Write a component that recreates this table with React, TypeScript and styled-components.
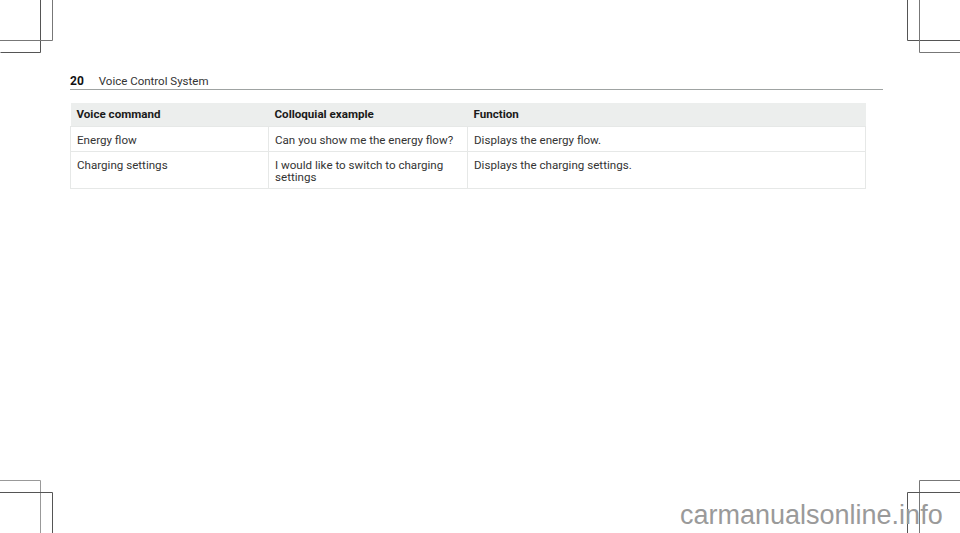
import React from 'react';
import styled, { createGlobalStyle } from 'styled-components';

type Row = {
  command: string;
  example: string;
  result: string;
};

const rows: Row[] = [
  { command: 'Energy flow', example: 'Can you show me the energy flow?', result: 'Displays the energy flow.' },
  { command: 'Charging settings', example: 'I would like to switch to charging settings', result: 'Displays the charging settings.' },
];

function CropMarks() {
  return (
    <>
      <StyledMark style={{ left: 0, top: 0 }} viewBox="0 0 60 60">
        <path d="M40.5 0V52.5M0.5 52.5H40.5" stroke="#555" fill="none" />
        <path d="M52.5 0V40.5M0 40.5H52.5" stroke="#777" fill="none" />
      </StyledMark>
      <StyledMark style={{ right: 0, top: 0 }} viewBox="0 0 60 60">
        <path d="M7.5 0V40.5H60" stroke="#555" fill="none" />
        <path d="M19.5 0V52.5H60" stroke="#777" fill="none" />
      </StyledMark>
      <StyledMark style={{ left: 0, bottom: 0 }} viewBox="0 0 60 60">
        <path d="M0 7.5H40.5V60" stroke="#999" fill="none" />
        <path d="M0 19.5H52.5V60" stroke="#555" fill="none" />
      </StyledMark>
      <StyledMark style={{ right: 0, bottom: 0 }} viewBox="0 0 60 60">
        <path d="M60 7.5H19.5V60" stroke="#777" fill="none" />
        <path d="M60 19.5H7.5V60" stroke="#555" fill="none" />
      </StyledMark>
    </>
  );
}

function App() {
  return (
    <StyledPage>
      <GlobalStyle />
      <CropMarks />
      <StyledHeader>
        <StyledPageNo>20</StyledPageNo>
        <span>Voice Control System</span>
      </StyledHeader>

      <StyledTable>
        <colgroup>
          <col style={{ width: 198 }} />
          <col style={{ width: 199 }} />
          <col style={{ width: 398 }} />
        </colgroup>
        <thead>
          <tr>
            <StyledTh>Voice command</StyledTh>
            <StyledTh>Colloquial example</StyledTh>
            <StyledTh>Function</StyledTh>
          </tr>
        </thead>
        <tbody>
          {rows.map((row) => (
            <tr key={row.command}>
              <StyledTd>{row.command}</StyledTd>
              <StyledTd>{row.example}</StyledTd>
              <StyledTd>{row.result}</StyledTd>
            </tr>
          ))}
        </tbody>
      </StyledTable>

      <StyledWatermark>carmanualsonline.info</StyledWatermark>
    </StyledPage>
  );
}

const GlobalStyle = createGlobalStyle`
  html, body {
    margin: 0;
    padding: 0;
    background: #ffffff;
  }
`;

const StyledPage = styled.div`
  position: relative;
  width: 960px;
  height: 533px;
  overflow: hidden;
  padding: 73px 0 0 70px;
  box-sizing: border-box;
  font-family: Roboto, 'Liberation Sans', sans-serif;
  color: #222;
`;

const StyledMark = styled.svg`
  position: absolute;
  width: 60px;
  height: 60px;
`;

const StyledHeader = styled.div`
  display: flex;
  align-items: center;
  gap: 15px;
  width: 813px;
  height: 15px;
  padding-bottom: 1px;
  border-bottom: 1.5px solid #9fa3a2;
  font-size: 11.5px;
  color: #333;
`;

const StyledPageNo = styled.span`
  font-size: 12px;
  font-weight: 700;
  color: #111;
`;

const StyledTable = styled.table`
  margin-top: 13px;
  width: 795px;
  border-collapse: collapse;
  table-layout: fixed;
  font-size: 11.6px;
  line-height: 12.7px;
`;

const StyledTh = styled.th`
  padding: 5px 6px 5px;
  height: 13px;
  background: #eceeed;
  text-align: left;
  font-weight: 700;
  color: #1a1a1a;
`;

const StyledTd = styled.td`
  padding: 7px 6px 4px;
  vertical-align: top;
  border: 1px solid #e6e8e7;
  color: #333;
`;

const StyledWatermark = styled.div`
  position: absolute;
  left: 680px;
  top: 500px;
  font-family: 'Liberation Sans', Arial, sans-serif;
  font-size: 27px;
  line-height: 30px;
  color: #9a9a9a;
`;

export default App;
